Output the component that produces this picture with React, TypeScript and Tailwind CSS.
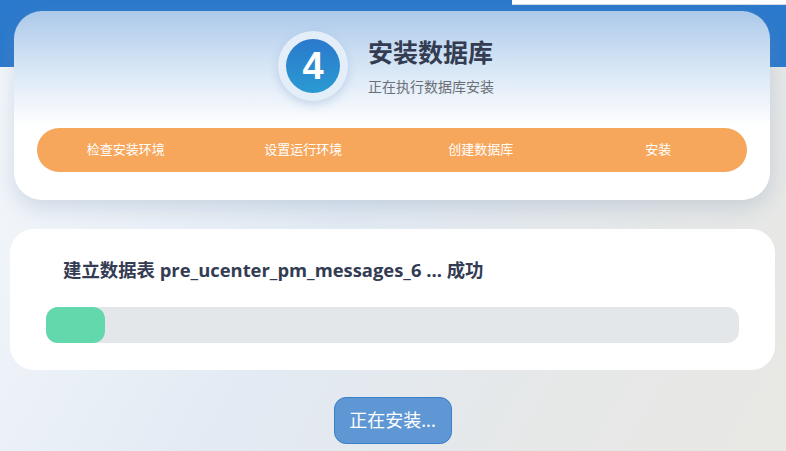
import React from "react";

const steps = ["检查安装环境", "设置运行环境", "创建数据库", "安装"];

export default function App() {
  return (
    <div
      className="relative min-h-[451px] w-full overflow-hidden bg-[linear-gradient(to_bottom,#2b79cc_0px,#2b79cc_67px,transparent_67px),linear-gradient(120deg,#f6f9fc_0%,#e2eaf3_45%,#e6e8e8_75%,#e8e8e4_100%)]"
      style={{ fontFamily: '"Noto Sans", "Noto Sans CJK SC", sans-serif' }}
    >
      <div className="absolute right-0 top-0 h-[5px] w-[274px] border-b border-[#d6dce4] bg-white" />

      <div className="flex flex-col pt-[11px]">
        {/* Card 1 */}
        <div className="ml-[14px] w-[756px] rounded-[28px] bg-[linear-gradient(to_bottom,#acc9ea_0px,#d2e3f4_50px,#eef4fb_90px,#ffffff_115px)] px-[23px] pb-[28px] pt-[20px] shadow-[0_8px_22px_rgba(120,145,175,0.28)]">
          <div className="flex h-[70px] items-center justify-center pr-[12px]">
            <div className="flex h-[70px] w-[70px] items-center justify-center rounded-full bg-[#e4eef9] shadow-[0_4px_10px_rgba(110,150,200,0.3)]">
              <div className="flex h-[54px] w-[54px] items-center justify-center rounded-full bg-[linear-gradient(to_bottom,#2b79cc,#2a9ad2)]">
                <span
                  className="text-[38px] font-bold leading-none text-white"
                  style={{ fontFamily: '"Liberation Sans", Arial, sans-serif' }}
                >
                  4
                </span>
              </div>
            </div>
            <div className="ml-[20px] flex flex-col">
              <div className="text-[25px] font-bold leading-[32px] text-[#333c52]">安装数据库</div>
              <div className="mt-[9px] text-[14px] leading-[20px] text-[#6b6f76]">正在执行数据库安装</div>
            </div>
          </div>
          <div className="mt-[27px] grid h-[44px] grid-cols-4 items-center rounded-full bg-[#f7a75c]">
            {steps.map((s) => (
              <div key={s} className="text-center text-[13px] text-white">
                {s}
              </div>
            ))}
          </div>
        </div>

        {/* Card 2 */}
        <div className="ml-[10px] mt-[29px] w-[765px] rounded-[24px] bg-white pb-[27px] pt-[29px]">
          <div
            className="pl-[53px] text-[18.4px] font-bold leading-[24px] text-[#333c52]"
            style={{ fontFamily: '"Open Sans", "Noto Sans CJK SC", sans-serif' }}
          >
            建立数据表 pre_ucenter_pm_messages_6 ... 成功
          </div>
          <div className="ml-[36px] mt-[25px] h-[36px] w-[693px] rounded-[12px] bg-[#e4e7e9]">
            <div className="h-full rounded-[12px] bg-[#63d8ad]" style={{ width: "59px" }} />
          </div>
        </div>

        {/* Button */}
        <div className="mt-[27px] flex justify-center pr-[1px]">
          <button className="flex h-[47px] w-[118px] items-center justify-center rounded-[12px] border border-[#3a7fcc] bg-[#5e97d3] text-[18px] text-white">
            正在安装...
          </button>
        </div>
      </div>
    </div>
  );
}
